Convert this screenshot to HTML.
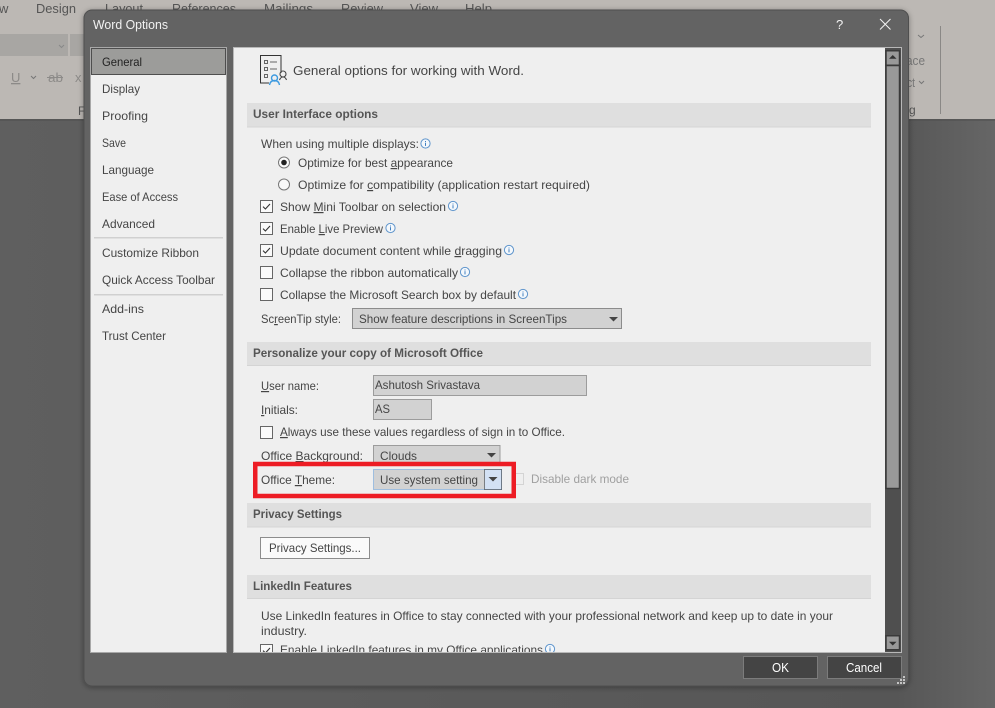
<!DOCTYPE html>
<html><head><meta charset="utf-8"><title>Word Options</title>
<style>
html,body{margin:0;padding:0;width:995px;height:708px;overflow:hidden;background:#5e5e5e}
svg{display:block}
text{font-family:"Liberation Sans",sans-serif;font-size:12px;fill:#454545;white-space:pre}
.b{font-weight:bold;fill:#555}
.u{text-decoration:underline}
.rb{font-size:13px;fill:#555}
</style></head><body>
<svg width="995" height="708" viewBox="0 0 995 708" xmlns="http://www.w3.org/2000/svg">
<defs>
<linearGradient id="bg" x1="0" x2="1" y1="0" y2="0"><stop offset="0" stop-color="#5f5f5f"/><stop offset=".9" stop-color="#565656"/><stop offset="1" stop-color="#666"/></linearGradient>
<filter id="sh" x="-5%" y="-5%" width="110%" height="110%"><feDropShadow dx="0" dy="1" stdDeviation="3" flood-color="#000" flood-opacity=".35"/></filter>
<g id="i"><circle r="4.6" fill="#f4f8fc" stroke="#5f95cc" stroke-width="1"/><rect x="-.5" y="-2.5" width="1" height="1" fill="#3f7fc0"/><rect x="-.5" y="-.8" width="1" height="3.2" fill="#3f7fc0"/></g>
<g id="c"><rect x=".5" y=".5" width="12" height="12" fill="#fafafa" stroke="#666"/><path d="M3 6.6l2.4 2.4 4.6-5" fill="none" stroke="#333" stroke-width="1.1"/></g>
<g id="e"><rect x=".5" y=".5" width="12" height="12" fill="#fafafa" stroke="#666"/></g>
<path id="t" d="M-4.5 0h9L0 4.5z" fill="#444"/>
<clipPath id="pc"><rect x="234" y="48" width="651" height="604"/></clipPath>
</defs>

<rect width="995" height="708" fill="url(#bg)"/>
<rect width="995" height="119" fill="#bcb8b4"/>
<rect y="119" width="995" height="2" fill="#4e4e4e" opacity=".5"/>
<text class="rb" x="-1" y="13">w</text>
<text class="rb" x="36" y="13" textLength="40" lengthAdjust="spacingAndGlyphs">Design</text>
<text class="rb" x="105" y="13" textLength="38" lengthAdjust="spacingAndGlyphs">Layout</text>
<text class="rb" x="172" y="13" textLength="64" lengthAdjust="spacingAndGlyphs">References</text>
<text class="rb" x="264" y="13" textLength="49" lengthAdjust="spacingAndGlyphs">Mailings</text>
<text class="rb" x="341" y="13" textLength="42" lengthAdjust="spacingAndGlyphs">Review</text>
<text class="rb" x="410" y="13" textLength="28" lengthAdjust="spacingAndGlyphs">View</text>
<text class="rb" x="465" y="13" textLength="27" lengthAdjust="spacingAndGlyphs">Help</text>
<rect x="0" y="34" width="68" height="22" fill="#a8a6a3"/>
<rect x="70" y="34" width="16" height="22" fill="#a8a6a3"/>
<path d="M59 45l2.500 2.500 2.500-2.500" fill="none" stroke="#888" stroke-width="1"/>
<text x="11" y="82" style="font-size:13px;fill:#8c8a88" class="u">U</text>
<path d="M31 76l2.500 2.500 2.500-2.500" fill="none" stroke="#777" stroke-width="1"/>
<text x="48" y="82" textLength="15" lengthAdjust="spacingAndGlyphs" style="font-size:13px;fill:#8c8a88">ab</text>
<rect x="47" y="77" width="16" height="1" fill="#8c8a88"/>
<text x="75" y="82" style="font-size:13px;fill:#8c8a88">x</text>
<text x="78" y="115" style="fill:#555">F</text>
<path d="M918 35l3 2.500 3-2.500" fill="none" stroke="#777" stroke-width="1"/>
<text x="906" y="65" textLength="19" lengthAdjust="spacingAndGlyphs" style="font-size:13px;fill:#777">ace</text>
<text x="907" y="87" textLength="8" lengthAdjust="spacingAndGlyphs" style="font-size:13px;fill:#777">ct</text>
<path d="M919 81l2.500 2.500 2.500-2.500" fill="none" stroke="#777" stroke-width="1"/>
<text x="909" y="114" style="fill:#555">g</text>
<rect x="940" y="26" width="1" height="88" fill="#8a8886"/>

<rect x="84" y="10" width="824.500" height="676" rx="8" fill="#646464" stroke="#4f4f4f" filter="url(#sh)"/>
<text x="93" y="29" textLength="75" lengthAdjust="spacingAndGlyphs" style="font-size:12.500px;fill:#f2f2f2">Word Options</text>
<text x="836" y="29" style="font-size:13px;fill:#f2f2f2">?</text>
<path d="M880 19l10.500 10.500M890.500 19L880 29.500" stroke="#f2f2f2" stroke-width="1" fill="none"/>

<rect x="90.500" y="47.500" width="136" height="605" fill="#efefef" stroke="#a8a8a8"/>
<rect x="91.500" y="48.500" width="134" height="26" fill="#9c9c9a" stroke="#4e4e4e"/>
<text x="102" y="66" textLength="40" lengthAdjust="spacingAndGlyphs" style="fill:#222">General</text>
<text x="102" y="93" textLength="38" lengthAdjust="spacingAndGlyphs">Display</text>
<text x="102" y="120" textLength="46" lengthAdjust="spacingAndGlyphs">Proofing</text>
<text x="102" y="147" textLength="24" lengthAdjust="spacingAndGlyphs">Save</text>
<text x="102" y="174" textLength="52" lengthAdjust="spacingAndGlyphs">Language</text>
<text x="102" y="201" textLength="76" lengthAdjust="spacingAndGlyphs">Ease of Access</text>
<text x="102" y="228" textLength="53" lengthAdjust="spacingAndGlyphs">Advanced</text>
<rect x="94" y="237" width="129" height="1.500" fill="#d0d0d0"/>
<text x="102" y="257" textLength="97" lengthAdjust="spacingAndGlyphs">Customize Ribbon</text>
<text x="102" y="284" textLength="113" lengthAdjust="spacingAndGlyphs">Quick Access Toolbar</text>
<rect x="94" y="294" width="129" height="1.500" fill="#d0d0d0"/>
<text x="102" y="313" textLength="42" lengthAdjust="spacingAndGlyphs">Add-ins</text>
<text x="102" y="340" textLength="64" lengthAdjust="spacingAndGlyphs">Trust Center</text>

<rect x="233" y="47" width="669" height="606" fill="#b8b8b8"/>
<rect x="234" y="48" width="651" height="604" fill="#efefef"/>
<g clip-path="url(#pc)">
<!-- header icon -->
<path d="M281 73V55.500H260.500V83H269" fill="#efefef" stroke="#333" stroke-width="1"/>
<g fill="none" stroke="#666" stroke-width="1"><rect x="264.500" y="60.500" width="3" height="3"/><rect x="264.500" y="67.500" width="3" height="3"/><rect x="264.500" y="74.500" width="3" height="3"/><path d="M270 62h7M270 69h7"/></g>
<circle cx="274.500" cy="78" r="3" fill="#efefef" stroke="#3d9ae0" stroke-width="1.400"/>
<path d="M269.500 85c.5-3 2.500-4.500 5-4.500s4.500 1.500 5 4.500" fill="none" stroke="#3d9ae0" stroke-width="1.400"/>
<circle cx="283" cy="74" r="3" fill="none" stroke="#444" stroke-width="1.100"/>
<path d="M279.500 80c.8-2 2-3 3.500-3s2.800 1 3.500 3" fill="none" stroke="#444" stroke-width="1.100"/>
<text x="293" y="75" textLength="231" lengthAdjust="spacingAndGlyphs" style="font-size:13px">General options for working with Word.</text>

<rect x="247" y="103" width="624" height="23.500" fill="#dfdfdf"/>
<rect x="247" y="126.500" width="624" height="1" fill="#d4d4d4"/>
<text class="b" x="253" y="118" textLength="125" lengthAdjust="spacingAndGlyphs">User Interface options</text>

<text x="261" y="148" textLength="158" lengthAdjust="spacingAndGlyphs">When using multiple displays:</text>
<use href="#i" x="425.500" y="143.500"/>
<circle cx="284" cy="162.500" r="5.500" fill="#fafafa" stroke="#777"/><circle cx="284" cy="162.500" r="2.800" fill="#222"/>
<text x="298" y="167" textLength="155" lengthAdjust="spacingAndGlyphs">Optimize for best <tspan class="u">a</tspan>ppearance</text>
<circle cx="284" cy="184.500" r="5.500" fill="#fafafa" stroke="#777"/>
<text x="298" y="189" textLength="292" lengthAdjust="spacingAndGlyphs">Optimize for <tspan class="u">c</tspan>ompatibility (application restart required)</text>

<use href="#c" x="260" y="200"/>
<text x="280" y="211" textLength="166" lengthAdjust="spacingAndGlyphs">Show <tspan class="u">M</tspan>ini Toolbar on selection</text>
<use href="#i" x="453" y="206"/>
<use href="#c" x="260" y="222"/>
<text x="280" y="233" textLength="103" lengthAdjust="spacingAndGlyphs">Enable <tspan class="u">L</tspan>ive Preview</text>
<use href="#i" x="390.500" y="228"/>
<use href="#c" x="260" y="244"/>
<text x="280" y="255" textLength="222" lengthAdjust="spacingAndGlyphs">Update document content while <tspan class="u">d</tspan>ragging</text>
<use href="#i" x="509" y="250"/>
<use href="#e" x="260" y="266"/>
<text x="280" y="277" textLength="178" lengthAdjust="spacingAndGlyphs">Collapse the ribbon automatically</text>
<use href="#i" x="465" y="272"/>
<use href="#e" x="260" y="288"/>
<text x="280" y="299" textLength="236" lengthAdjust="spacingAndGlyphs">Collapse the Microsoft Search box by default</text>
<use href="#i" x="523" y="294"/>

<text x="261" y="323" textLength="80" lengthAdjust="spacingAndGlyphs">Sc<tspan class="u">r</tspan>eenTip style:</text>
<rect x="352.500" y="308.500" width="269" height="20" fill="#d2d2d2" stroke="#8c8c8c"/>
<text x="359" y="323" textLength="208" lengthAdjust="spacingAndGlyphs">Show feature descriptions in ScreenTips</text>
<use href="#t" x="613.500" y="317"/>

<rect x="247" y="342" width="624" height="23" fill="#dfdfdf"/>
<rect x="247" y="365" width="624" height="1" fill="#d4d4d4"/>
<text class="b" x="253" y="357" textLength="230" lengthAdjust="spacingAndGlyphs">Personalize your copy of Microsoft Office</text>

<text x="261" y="390" textLength="58" lengthAdjust="spacingAndGlyphs"><tspan class="u">U</tspan>ser name:</text>
<rect x="373.500" y="375.500" width="213" height="20" fill="#d2d2d2" stroke="#9c9c9c"/>
<text x="375" y="389" textLength="105" lengthAdjust="spacingAndGlyphs">Ashutosh Srivastava</text>
<text x="261" y="414" textLength="37" lengthAdjust="spacingAndGlyphs"><tspan class="u">I</tspan>nitials:</text>
<rect x="373.500" y="399.500" width="58" height="20" fill="#d2d2d2" stroke="#9c9c9c"/>
<text x="375" y="413" textLength="15" lengthAdjust="spacingAndGlyphs">AS</text>

<use href="#e" x="260" y="426"/>
<text x="280" y="436" textLength="285" lengthAdjust="spacingAndGlyphs"><tspan class="u">A</tspan>lways use these values regardless of sign in to Office.</text>

<text x="261" y="460" textLength="102" lengthAdjust="spacingAndGlyphs">Office <tspan class="u">B</tspan>ackground:</text>
<rect x="373.500" y="445.500" width="126.500" height="20" fill="#d2d2d2" stroke="#9c9c9c"/>
<text x="380" y="460" textLength="37" lengthAdjust="spacingAndGlyphs">Clouds</text>
<use href="#t" x="491.500" y="453"/>

<text x="261" y="484" textLength="74" lengthAdjust="spacingAndGlyphs">Office <tspan class="u">T</tspan>heme:</text>
<rect x="373.500" y="469.500" width="128" height="20" fill="#d2d2d2" stroke="#9fbedf"/>
<text x="380" y="484" textLength="98" lengthAdjust="spacingAndGlyphs">Use system setting</text>
<rect x="484.500" y="469.500" width="17" height="20" fill="#d3e1f4" stroke="#222" stroke-dasharray="1 1"/>
<use href="#t" x="493" y="477"/>
<rect x="515.500" y="473.500" width="8" height="11" fill="#efefef" stroke="#d4d4d4"/>
<text x="531" y="483" textLength="98" lengthAdjust="spacingAndGlyphs" style="fill:#a0a0a0">Disable dark mode</text>
<rect x="255.250" y="464" width="258.500" height="32" fill="none" stroke="#ed1c24" stroke-width="4.500"/>

<rect x="247" y="503" width="624" height="23.500" fill="#dfdfdf"/>
<rect x="247" y="526.500" width="624" height="1" fill="#d4d4d4"/>
<text class="b" x="253" y="518" textLength="89" lengthAdjust="spacingAndGlyphs">Privacy Settings</text>
<rect x="260.500" y="537.500" width="109" height="21" fill="#fafafa" stroke="#8c8c8c"/>
<text x="269" y="552" textLength="92" lengthAdjust="spacingAndGlyphs">Privacy Settings...</text>

<rect x="247" y="575" width="624" height="23" fill="#dfdfdf"/>
<rect x="247" y="598" width="624" height="1" fill="#d4d4d4"/>
<text class="b" x="253" y="590" textLength="99" lengthAdjust="spacingAndGlyphs">LinkedIn Features</text>
<text x="261" y="620" textLength="572" lengthAdjust="spacingAndGlyphs">Use LinkedIn features in Office to stay connected with your professional network and keep up to date in your</text>
<text x="261" y="635" textLength="46" lengthAdjust="spacingAndGlyphs">industry.</text>
<use href="#c" x="260" y="644"/>
<text x="280" y="654" textLength="263" lengthAdjust="spacingAndGlyphs">Enable LinkedIn features in my Office applications</text>
<use href="#i" x="550" y="649"/>
</g>

<rect x="885" y="48" width="16" height="604" fill="#4f4f4f"/>
<g stroke="#3a3a3a" stroke-width="1.500" fill="#999">
<rect x="886" y="50.750" width="13.500" height="14.500"/>
<rect x="886" y="65.500" width="13.500" height="423"/>
<rect x="886" y="635.750" width="13.500" height="14"/>
</g>
<path d="M892.750 55l-3.800 3.800h7.600z" fill="#333"/>
<path d="M892.750 645.500l-3.800-3.800h7.600z" fill="#333"/>

<rect x="743.500" y="656.500" width="74" height="22" fill="#444" stroke="#7c7c7c"/>
<text x="772" y="672" textLength="17" lengthAdjust="spacingAndGlyphs" style="fill:#fff;font-size:12.500px">OK</text>
<rect x="827.500" y="656.500" width="74" height="22" fill="#444" stroke="#7c7c7c"/>
<text x="846" y="672" textLength="36" lengthAdjust="spacingAndGlyphs" style="fill:#fff;font-size:12.500px">Cancel</text>
<g fill="#c4c4c4"><rect x="903" y="676" width="2" height="2"/><rect x="900" y="679" width="2" height="2"/><rect x="903" y="679" width="2" height="2"/><rect x="897" y="682" width="2" height="2"/><rect x="900" y="682" width="2" height="2"/><rect x="903" y="682" width="2" height="2"/></g>
</svg>
</body></html>
